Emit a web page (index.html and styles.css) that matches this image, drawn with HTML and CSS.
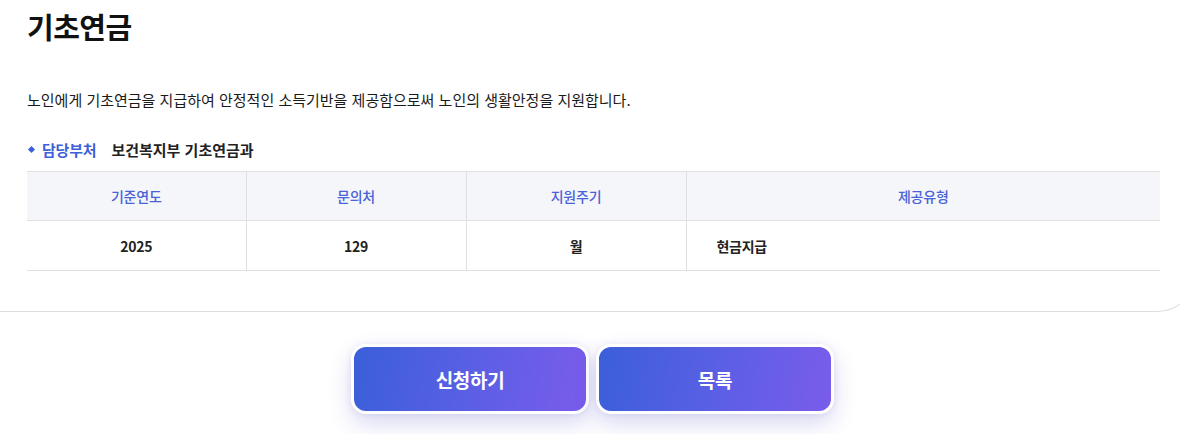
FILE: index.html
```html
<!DOCTYPE html>
<html lang="ko">
<head>
<meta charset="utf-8">
<link rel="stylesheet" href="styles.css">
</head>
<body>
<div class="card">
  <h1 class="title">기초연금</h1>
  <p class="desc">노인에게 기초연금을 지급하여 안정적인 소득기반을 제공함으로써 노인의 생활안정을 지원합니다.</p>
  <div class="dept"><span class="dept-label">담당부처</span><span class="dept-name">보건복지부 기초연금과</span></div>
  <table class="info">
    <thead>
      <tr><th class="c1">기준연도</th><th class="c2">문의처</th><th class="c3">지원주기</th><th class="c4">제공유형</th></tr>
    </thead>
    <tbody>
      <tr><td class="c1">2025</td><td class="c2">129</td><td class="c3">월</td><td class="c4 left">현금지급</td></tr>
    </tbody>
  </table>
</div>
<div class="actions">
  <button class="btn">신청하기</button>
  <button class="btn">목록</button>
</div>
</body>
</html>
```
FILE: styles.css
```css
* { box-sizing: border-box; }
html, body { margin: 0; padding: 0; background: #fff; }
body {
  font-family: "Noto Sans CJK KR", "Noto Sans", sans-serif;
  color: #111;
  width: 1180px;
  overflow: hidden;
}
.card {
  margin-right: -14px;
  padding: 0 34px 40px 27px;
  border-bottom: 1px solid #dedede;
  border-right: 1px solid #dedede;
  border-bottom-right-radius: 36px;
}
.title {
  margin: 0;
  padding-top: 6px;
  font-size: 29px;
  font-weight: 700;
  line-height: 40px;
  letter-spacing: -0.5px;
  color: #111;
}
.desc {
  margin: 44px 0 0;
  font-size: 15px;
  line-height: 20px;
  letter-spacing: 0;
  color: #1a1a1a;
}
.dept {
  margin-top: 29px;
  display: flex;
  align-items: center;
  height: 20px;
  font-size: 15px;
  font-weight: 700;
  letter-spacing: -0.2px;
}
.dept-label {
  position: relative;
  padding-left: 15px;
  color: #3d5fd8;
  margin-right: 15px;
}
.dept-label::before {
  content: "";
  position: absolute;
  left: 2px;
  top: 8px;
  width: 5px;
  height: 5px;
  background: #3d5fd8;
  transform: rotate(45deg);
}
.dept-name { color: #222; letter-spacing: 0; }
.info {
  margin-top: 12px;
  width: 1133px;
  border-collapse: collapse;
  table-layout: fixed;
}
.info th, .info td {
  border-top: 1px solid #e0e0e0;
  border-bottom: 1px solid #e0e0e0;
  border-left: 1px solid #e0e0e0;
  text-align: center;
}
.info th:first-child, .info td:first-child { border-left: none; }
.info th {
  height: 49px;
  background: #f5f6fa;
  color: #4a62d8;
  font-size: 14px;
  font-weight: 500;
  letter-spacing: -0.2px;
}
.info td {
  height: 50px;
  font-weight: 700;
  color: #222;
  font-size: 14px;
  letter-spacing: -0.3px;
}
.info td.left { text-align: left; padding-left: 30px; }
.c1 { width: 219px; }
.c2, .c3 { width: 220px; }
.actions {
  display: flex;
  justify-content: center;
  gap: 7px;
  padding: 32px 0 20px 5px;
}
.btn {
  width: 238px;
  height: 70px;
  border: 3px solid #fff;
  border-radius: 15px;
  background: linear-gradient(100deg, #3b5fd9 0%, #5a5fe4 50%, #7a5ceb 100%);
  color: #fff;
  font-family: inherit;
  font-size: 19px;
  font-weight: 700;
  letter-spacing: -0.3px;
  box-shadow: 0 10px 22px rgba(80, 80, 200, 0.22), 0 0 6px rgba(120,120,200,0.15);
  cursor: pointer;
}
```
